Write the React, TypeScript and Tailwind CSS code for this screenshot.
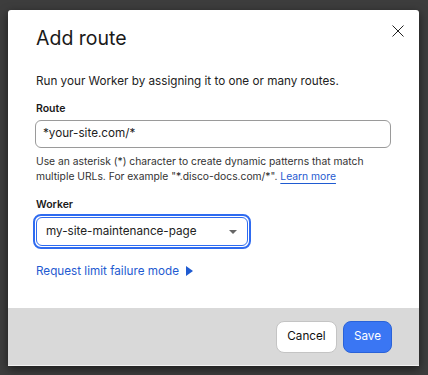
const App = () => {
  return (
    <div className="h-[375px] w-[428px] overflow-hidden bg-[#3d3d3d] pl-[8px] pt-[10px] font-['Inter',sans-serif]">
      <div className="flex w-[411px] flex-col rounded-t-[3px] bg-white shadow-[0_3px_10px_rgba(0,0,0,0.55)]">
        {/* Header */}
        <div className="flex items-start justify-between pl-[28px] pr-[15px] pt-[16px]">
          <h2 className="text-[19.5px] leading-[24px] text-[#1a1a1a]">Add route</h2>
          <svg className="-mt-[1px] h-[12px] w-[12px]" viewBox="0 0 12 12" fill="none" stroke="#222" strokeWidth="1">
            <path d="M0.5 0.5 L11.5 11.5 M11.5 0.5 L0.5 11.5" />
          </svg>
        </div>

        {/* Body */}
        <div className="flex flex-col px-[27px] pt-[23px] pb-[29px]">
          <p className="pl-[1px] text-[11.7px] leading-[16px] text-[#222]">
            Run your Worker by assigning it to one or many routes.
          </p>

          <label className="mt-[13px] pl-[1px] text-[10.5px] font-semibold leading-[14px] text-[#1a1a1a]">Route</label>
          <div className="mt-[4px] flex h-[28px] w-[356px] items-center rounded-[6px] border border-[#9a9a9a] px-[7px] text-[11.7px] text-[#222]">
            *your-site.com/*
          </div>
          <p className="mt-[6px] w-[345px] pl-[1px] text-[10.3px] leading-[14.5px] text-[#333]">
            Use an asterisk (*) character to create dynamic patterns that match multiple URLs. For example "*.disco-docs.com/*".{" "}
            <a className="text-[#1f5bd1] underline decoration-[#1f5bd1] underline-offset-[3px]">Learn more</a>
          </p>

          <label className="mt-[15px] pl-[1px] text-[10.5px] font-semibold leading-[14px] text-[#1a1a1a]">Worker</label>
          <div className="-ml-[2px] mt-[2px] w-[218px] rounded-[8px] border-2 border-[#2f6bf0] p-[1px]">
            <div className="flex h-[29px] items-center justify-between rounded-[6px] border border-[#2f6bf0] pl-[9px] pr-[10px] text-[11.7px] text-[#222]">
              <span>my-site-maintenance-page</span>
              <span className="h-0 w-0 border-x-[4px] border-t-[4.5px] border-x-transparent border-t-[#666]" />
            </div>
          </div>

          <a className="mt-[14px] flex items-center gap-[7px] pl-[1px] text-[11.7px] leading-[16px] text-[#1f5bd1]">
            Request limit failure mode
            <span className="h-0 w-0 border-y-[5.5px] border-l-[7px] border-y-transparent border-l-[#1f5bd1]" />
          </a>
        </div>

        {/* Footer */}
        <div className="flex h-[58px] items-center justify-end gap-[6px] border-b border-[#f2f2f2] bg-[#d9d9d9] pr-[27px]">
          <button className="h-[32px] w-[61px] rounded-[8px] border border-[#c4c4c4] bg-white text-[11.7px] text-[#111]">
            Cancel
          </button>
          <button className="h-[32px] w-[49px] rounded-[8px] border border-[#2a62d8] bg-[#3a76f3] text-[11.7px] text-white">
            Save
          </button>
        </div>
      </div>
    </div>
  );
};

export default App;
